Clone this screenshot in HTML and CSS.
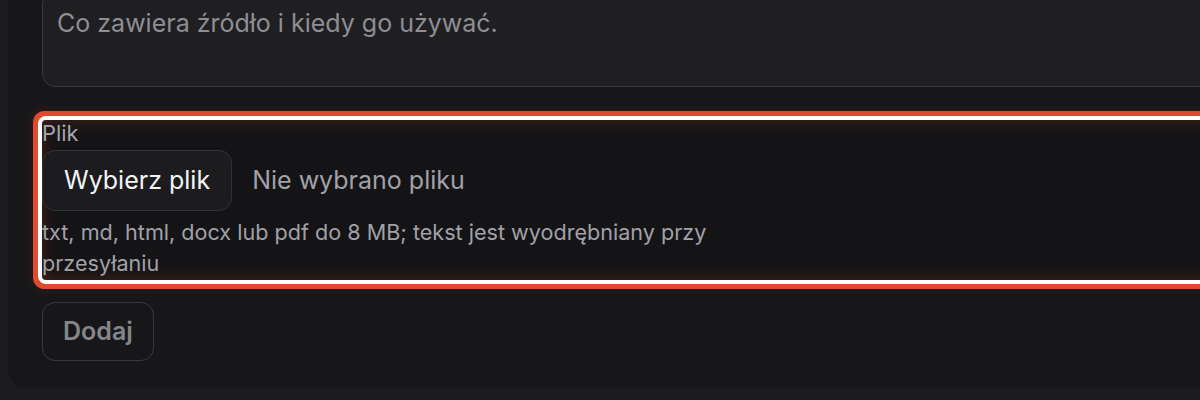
FILE: index.html
```html
<!DOCTYPE html>
<html lang="pl">
<head>
<meta charset="utf-8">
<title>Dodaj źródło</title>
<link rel="stylesheet" href="styles.css">
</head>
<body>
<div class="card">
  <textarea class="desc" placeholder="Co zawiera źródło i kiedy go używać."></textarea>
  <div class="field highlight">
    <label class="label">Plik</label>
    <div class="file-row">
      <button class="file-btn" type="button">Wybierz plik</button>
      <span class="file-name">Nie wybrano pliku</span>
    </div>
    <p class="hint">txt, md, html, docx lub pdf do 8 MB; tekst jest wyodrębniany przy przesyłaniu</p>
  </div>
  <div class="actions">
    <button class="submit" type="button" disabled>Dodaj</button>
  </div>
</div>
</body>
</html>
```

FILE: styles.css
```css
html, body {
  margin: 0;
  padding: 0;
  height: 100%;
  overflow: hidden;
}
body {
  background: #1c1c1f;
  font-family: Inter, "Noto Sans", "Liberation Sans", sans-serif;
}
.card {
  margin: -9px 0 0 8px;
  width: 1400px;
  background: #171719;
  border-radius: 0 0 0 18px;
  padding: 0 0 27px 34px;
  display: flex;
  flex-direction: column;
  box-sizing: border-box;
}
.desc {
  display: block;
  width: 1300px;
  height: 96px;
  box-sizing: border-box;
  margin: 0;
  padding: 13px 14px;
  background: #1f1f22;
  border: 1px solid #3a3a3e;
  border-radius: 13px;
  font-family: inherit;
  font-size: 25px;
  line-height: 37px;
  color: #e4e4e7;
  resize: none;
  outline: none;
}
.desc::placeholder {
  color: #8e8e94;
}
.field {
  margin-top: 33px;
  width: 1300px;
  display: flex;
  flex-direction: column;
}
.highlight {
  background: #141416;
  border-radius: 4px;
  box-shadow:
    0 0 0 4px #ffffff,
    0 0 0 9px #e04a2e,
    0 0 12px 10px rgba(224, 74, 46, 0.12),
    inset 0 0 16px rgba(224, 74, 46, 0.26);
}
.label {
  font-size: 21.9px;
  line-height: 27px;
  color: #a6a6ad;
}
.file-row {
  margin-top: 3px;
  display: flex;
  align-items: center;
  gap: 20px;
}
.file-btn {
  font-family: inherit;
  font-size: 25px;
  line-height: 35px;
  padding: 12px 21px;
  color: #f4f4f5;
  background: #1c1c1f;
  border: 1px solid #333337;
  border-radius: 13px;
}
.file-name {
  font-size: 25px;
  line-height: 35px;
  color: #a1a1a8;
}
.hint {
  margin: 6px 0 1px;
  max-width: 720px;
  font-size: 21.6px;
  line-height: 31px;
  color: #a1a1a8;
}
.actions {
  margin-top: 22px;
  display: flex;
}
.submit {
  font-family: inherit;
  font-size: 25px;
  font-weight: 600;
  line-height: 35px;
  padding: 11px 20px;
  color: #85858c;
  background: transparent;
  border: 1px solid #38383c;
  border-radius: 13px;
}
```
